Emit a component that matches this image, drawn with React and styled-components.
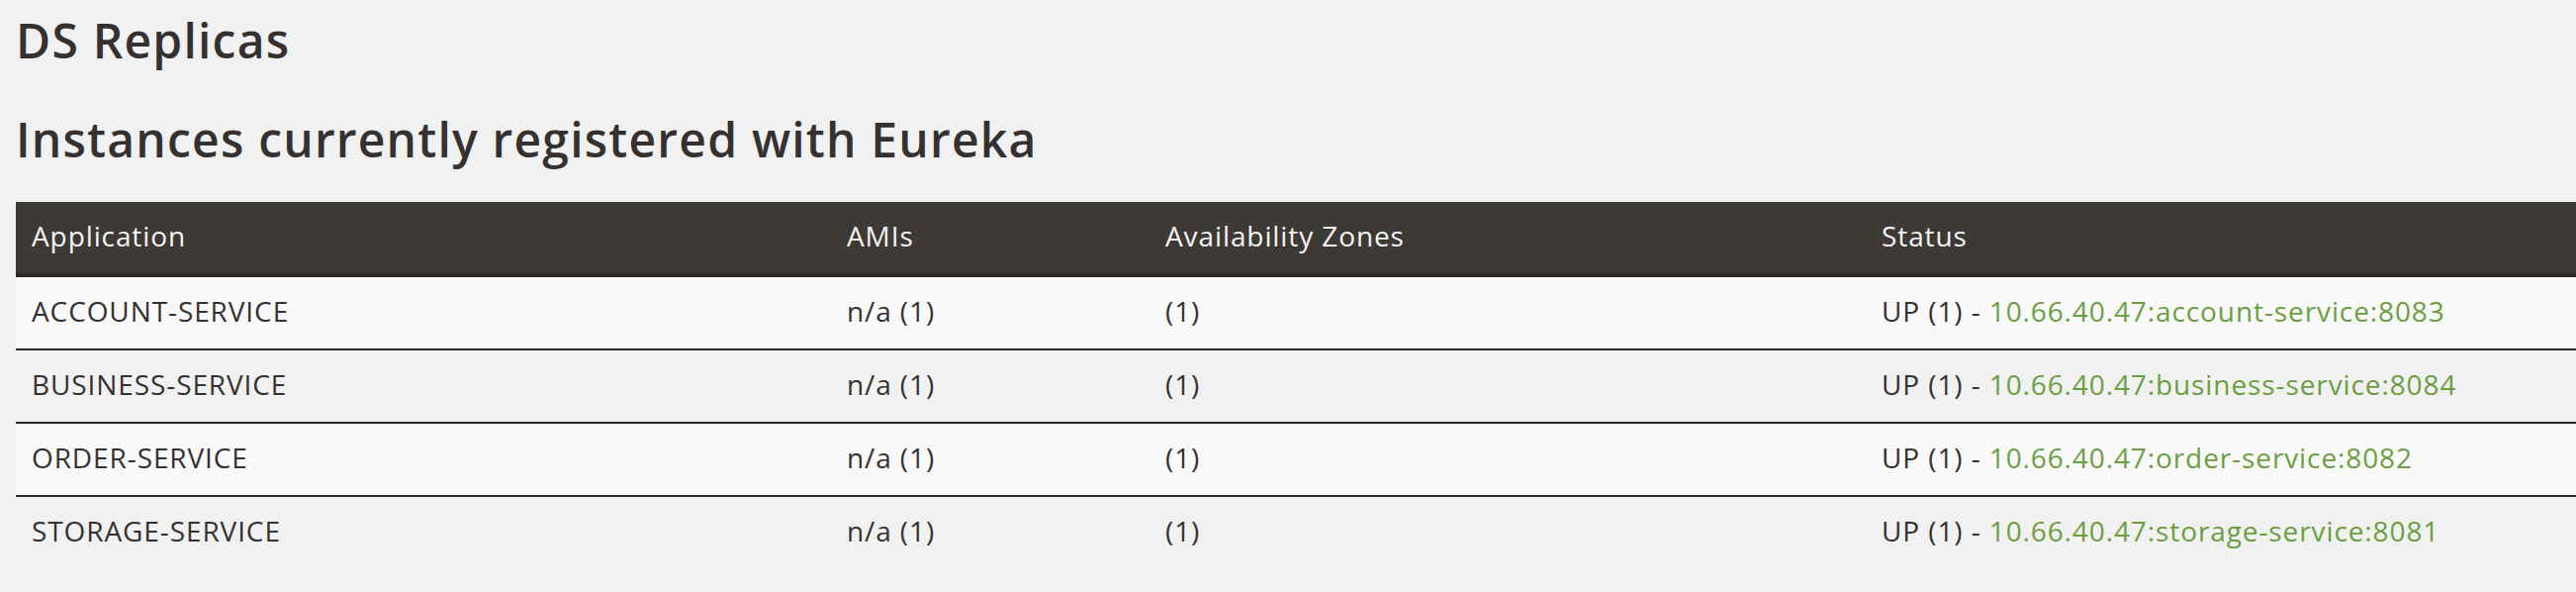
import React from 'react';
import styled, {createGlobalStyle} from 'styled-components';

const GlobalStyle = createGlobalStyle`
    html, body {
        margin: 0;
        padding: 0;
        background: #f1f1f1;
    }

    body {
        font-family: "Open Sans", "Liberation Sans", sans-serif;
        color: #353130;
        overflow: hidden;
    }
`;

const Page = styled.main`
    padding: 13px 0 0 16px;
`;

const Title = styled.h1`
    margin: 0 0 ${(props) => props.gap}px 0;
    font-size: 48px;
    line-height: 56px;
    font-weight: 600;
    letter-spacing: 1.2px;
    color: #353130;
`;

const Table = styled.table`
    width: 2588px;
    border-collapse: collapse;
    table-layout: fixed;
    font-size: 28px;
    line-height: 40px;
    letter-spacing: 0.9px;
`;

const HeadCell = styled.th`
    box-sizing: border-box;
    width: ${(props) => props.width}px;
    padding: 14px 16px 18px;
    text-align: left;
    font-weight: 400;
    color: #f4f4f4;
    background: #3d3935;
    border-bottom: 4px solid #2e2a28;
`;

const Row = styled.tr`
    background: ${(props) => props.odd ? '#f9f9f9' : '#f1f1f1'};

    &:not(:first-child) td {
        border-top: 2px solid #2e2a28;
    }
`;

const Cell = styled.td`
    padding: 14px 16px 18px;
    white-space: nowrap;
`;

const Instance = styled.a`
    color: #6a9f40;
    text-decoration: none;
`;

const columns = [
    {label: 'Application', width: 824},
    {label: 'AMIs', width: 322},
    {label: 'Availability Zones', width: 724},
    {label: 'Status', width: 718},
];

const instances = [
    {name: 'ACCOUNT-SERVICE', id: 'account-service', port: 8083},
    {name: 'BUSINESS-SERVICE', id: 'business-service', port: 8084},
    {name: 'ORDER-SERVICE', id: 'order-service', port: 8082},
    {name: 'STORAGE-SERVICE', id: 'storage-service', port: 8081},
];

export default function App() {
    return (
        <>
            <GlobalStyle />
            <Page>
                <Title gap={44}>DS Replicas</Title>
                <Title gap={35}>Instances currently registered with Eureka</Title>
                <Table>
                    <thead>
                        <tr>
                            {columns.map((column) => (
                                <HeadCell key={column.label} width={column.width}>{column.label}</HeadCell>
                            ))}
                        </tr>
                    </thead>
                    <tbody>
                        {instances.map((app, index) => {
                            const address = `10.66.40.47:${app.id}:${app.port}`;
                            return (
                                <Row key={app.id} odd={index % 2 === 0}>
                                    <Cell>{app.name}</Cell>
                                    <Cell>n/a (1)</Cell>
                                    <Cell>(1)</Cell>
                                    <Cell>
                                        UP (1) - <Instance href={`http://${address}/info`}>{address}</Instance>
                                    </Cell>
                                </Row>
                            );
                        })}
                    </tbody>
                </Table>
            </Page>
        </>
    );
}
